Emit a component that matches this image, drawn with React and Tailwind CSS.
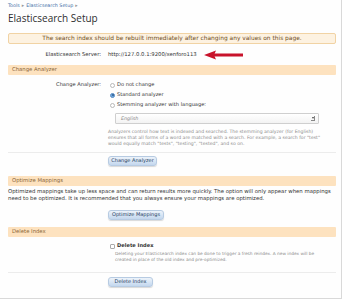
import React from "react";

const Header = ({ children, className = "" }) => (
  <div className={`h-[10px] flex items-center pl-[4px] bg-[#fde2bf] rounded-[1px] text-[5.3px] text-[#8a6536] ${className}`}>
    {children}
  </div>
);

const Button = ({ children, className = "" }) => (
  <div
    className={`h-[10px] flex items-center justify-center rounded-[3px] border border-[#b7cbe2] bg-gradient-to-b from-[#edf3fa] to-[#c3d7ee] text-[5px] text-[#23405f] shadow-[0_1px_1px_rgba(0,0,0,0.15)] ${className}`}
  >
    {children}
  </div>
);

const Radio = ({ checked, label }) => (
  <div className="h-[10px] flex items-center pl-[2px]">
    <span
      className={`w-[5px] h-[5px] rounded-full border ${
        checked ? "border-[#5a8cc4] bg-[#6ea6dc]" : "border-[#b8b8b8] bg-white"
      } flex items-center justify-center`}
    >
      {checked && <span className="w-[2px] h-[2px] rounded-full bg-[#2f5f93]" />}
    </span>
    <span className="ml-[2px] text-[5.1px] text-[#333]">{label}</span>
  </div>
);

export default function App() {
  return (
    <div
      className="w-[344px] h-[300px] bg-white overflow-hidden"
      style={{ fontFamily: '"DejaVu Sans", Verdana, sans-serif' }}
    >
      <div className="w-[342px] h-[299px] border-r border-b border-[#d9d9d9] bg-[#fefefe] pl-[8px] pr-[5px]">
        {/* breadcrumb */}
        <div className="h-[11px] flex items-center text-[4.8px] text-[#3f6ea6] gap-[2px]">
          <span>Tools</span>
          <span className="text-[#999]">▸</span>
          <span>Elasticsearch Setup</span>
          <span className="text-[#999]">▸</span>
        </div>
        <div
          className="h-[15px] flex items-center text-[10px] text-[#2e2e2e]"
          style={{ fontFamily: '"Open Sans", sans-serif' }}
        >
          Elasticsearch Setup
        </div>

        <div className="mt-[7px] h-[11px] flex items-center justify-center rounded-[2px] border border-[#f1d3a4] bg-[#fdf2e1] text-[5.9px] text-[#6e4e22]">
          The search index should be rebuilt immediately after changing any values on this page.
        </div>

        <div className="mt-[6px] h-[10px] flex items-center text-[5.3px] text-[#333]">
          <div className="w-[93px] text-right">Elasticsearch Server:</div>
          <div className="ml-[7px]">http://127.0.0.1:9200/xenforo113</div>
          <svg width="40" height="10" viewBox="0 0 40 10" className="ml-[7px]">
            <path d="M10 5 H39" stroke="#c8132b" strokeWidth="3" />
            <path d="M0 5 L12 0.5 L10 5 L12 9.5 Z" fill="#c8132b" />
          </svg>
        </div>

        <Header className="mt-[5px]">Change Analyzer</Header>

        <div className="mt-[5px] flex">
          <div className="w-[93px] h-[10px] flex items-center justify-end text-[5.1px] text-[#333]">
            Change Analyzer:
          </div>
          <div className="ml-[7px] w-[228px]">
            <Radio label="Do not change" />
            <Radio checked label="Standard analyzer" />
            <Radio label="Stemming analyzer with language:" />
            <div className="mt-[3px] ml-[7px] w-[204px] h-[11px] flex items-center justify-between border border-[#cfcfcf] rounded-[1px] bg-gradient-to-b from-white to-[#f3f3f3] pl-[5px] pr-[3px]">
              <span className="text-[4.8px] italic text-[#8a8a8a]">English</span>
              <span className="w-[4px] h-[5px] flex flex-col items-center justify-end border-r border-b border-[#888]">
                <span className="w-0 h-0 border-l-[1.5px] border-r-[1.5px] border-t-[2px] border-l-transparent border-r-transparent border-t-[#444] mb-[1px]" />
              </span>
            </div>
            <div className="mt-[5px] text-[4.6px] leading-[6px] text-[#8c8c8c] w-[220px] whitespace-nowrap">
              Analyzers control how text is indexed and searched. The stemming analyzer (for English)
              <br />
              ensures that all forms of a word are matched with a search. For example, a search for "test"
              <br />
              would equally match "tests", "testing", "tested", and so on.
            </div>
          </div>
        </div>

        <div className="mt-[5px] border-t border-[#ececec]" />
        <div className="mt-[3px] flex pl-[100px]">
          <Button className="w-[49px]">Change Analyzer</Button>
        </div>

        <Header className="mt-[10px]">Optimize Mappings</Header>
        <div className="mt-[2px] text-[5.35px] leading-[6.5px] text-[#333] whitespace-nowrap">
          Optimized mappings take up less space and can return results more quickly. The option will only appear when mappings
          <br />
          need to be optimized. It is recommended that you always ensure your mappings are optimized.
        </div>
        <div className="mt-[9px] flex pl-[100px]">
          <Button className="w-[56px]">Optimize Mappings</Button>
        </div>

        <Header className="mt-[7px]">Delete Index</Header>
        <div className="mt-[4px] pl-[102px]">
          <div className="h-[10px] flex items-center">
            <span className="w-[5px] h-[5px] border border-[#aaa] bg-white rounded-[1px]" />
            <span className="ml-[2px] text-[5.1px] font-semibold text-[#333]">Delete Index</span>
          </div>
          <div className="pl-[5px] text-[4.3px] leading-[6px] text-[#8c8c8c] whitespace-nowrap">
            Deleting your Elasticsearch index can be done to trigger a fresh reindex. A new index will be
            <br />
            created in place of the old index and pre-optimized.
          </div>
        </div>
        <div className="mt-[9px] border-t border-[#ececec]" />
        <div className="mt-[4px] flex pl-[100px]">
          <Button className="w-[45px]">Delete Index</Button>
        </div>
      </div>
    </div>
  );
}
